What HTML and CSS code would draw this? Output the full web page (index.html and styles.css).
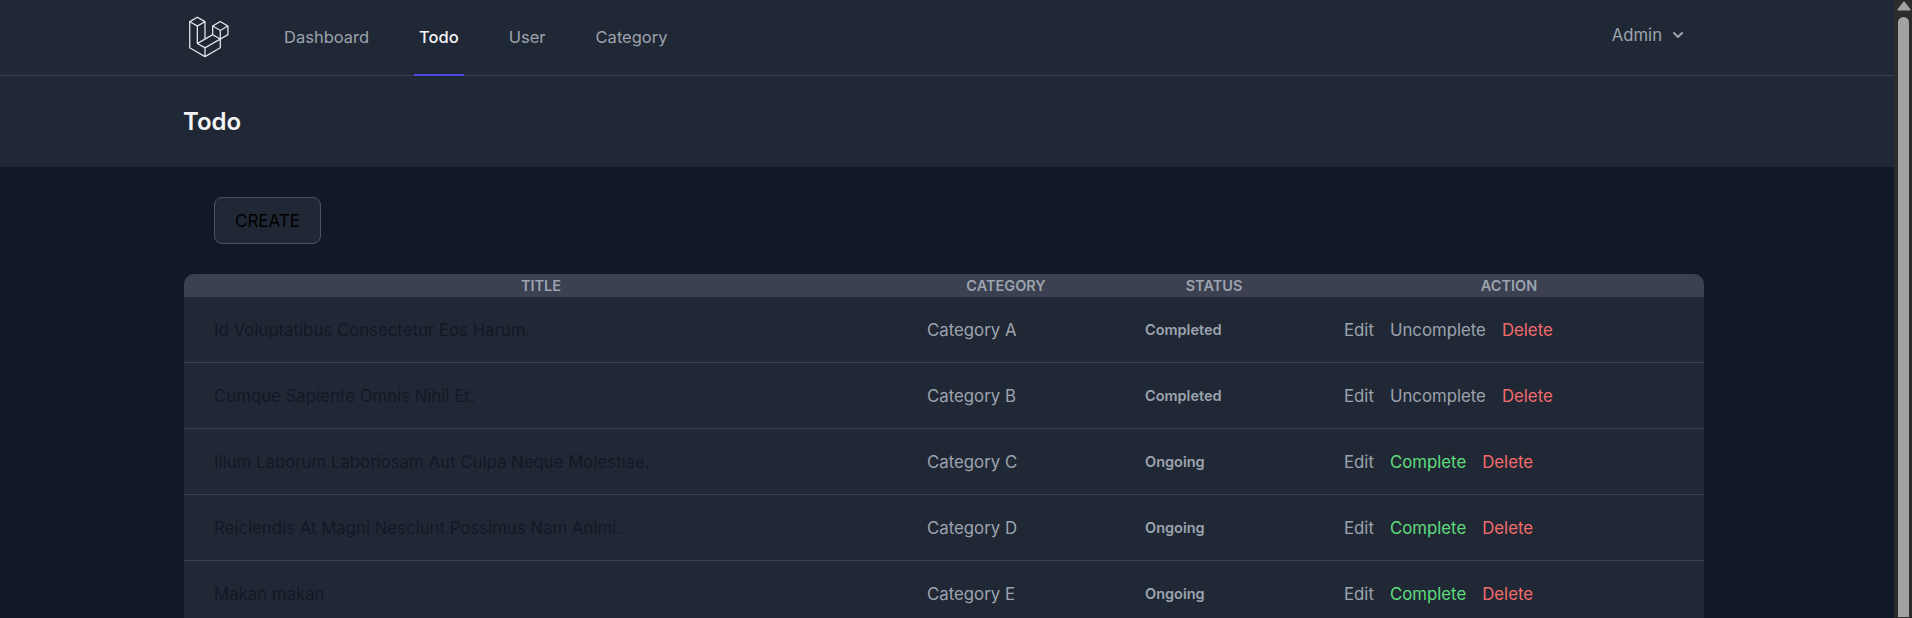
FILE: index.html
```html
<!DOCTYPE html>
<html lang="en">
<head>
<meta charset="utf-8">
<title>Todo</title>
<link rel="stylesheet" href="styles.css">
</head>
<body>
<div class="page">
  <nav class="nav">
    <div class="nav-inner">
      <div class="nav-left">
        <svg class="logo" viewBox="0 0 316 316" fill="currentColor">
          <path d="M305.8 81.125C305.77 80.995 305.69 80.885 305.65 80.755C305.56 80.525 305.49 80.285 305.37 80.075C305.29 79.935 305.17 79.815 305.07 79.685C304.94 79.515 304.83 79.325 304.68 79.175C304.55 79.045 304.39 78.955 304.25 78.845C304.09 78.715 303.95 78.575 303.77 78.475L251.32 48.275C249.97 47.495 248.31 47.495 246.96 48.275L194.51 78.475C194.33 78.575 194.19 78.725 194.03 78.845C193.89 78.955 193.73 79.045 193.6 79.175C193.45 79.325 193.34 79.515 193.21 79.685C193.11 79.815 192.99 79.935 192.91 80.075C192.79 80.285 192.71 80.525 192.63 80.755C192.58 80.875 192.51 80.995 192.48 81.125C192.38 81.495 192.33 81.875 192.33 82.265V139.625L148.62 164.795V52.575C148.62 52.185 148.57 51.805 148.47 51.435C148.44 51.305 148.36 51.195 148.32 51.065C148.23 50.835 148.16 50.595 148.04 50.385C147.96 50.245 147.84 50.125 147.74 49.995C147.61 49.825 147.5 49.635 147.35 49.485C147.22 49.355 147.06 49.265 146.92 49.155C146.76 49.025 146.62 48.885 146.44 48.785L93.99 18.585C92.64 17.805 90.98 17.805 89.63 18.585L37.18 48.785C37 48.885 36.86 49.035 36.7 49.155C36.56 49.265 36.4 49.355 36.27 49.485C36.12 49.635 36.01 49.825 35.88 49.995C35.78 50.125 35.66 50.245 35.58 50.385C35.46 50.595 35.38 50.835 35.3 51.065C35.25 51.185 35.18 51.305 35.15 51.435C35.05 51.805 35 52.185 35 52.575V232.235C35 233.795 35.84 235.245 37.19 236.025L142.1 296.425C142.33 296.555 142.58 296.635 142.83 296.725C142.95 296.765 143.06 296.835 143.18 296.865C143.55 296.965 143.93 297.015 144.31 297.015C144.69 297.015 145.07 296.965 145.44 296.865C145.55 296.835 145.65 296.775 145.76 296.735C146.02 296.645 146.28 296.565 146.52 296.425L251.43 236.025C252.79 235.245 253.62 233.805 253.62 232.235V174.885L303.86 145.955C305.22 145.175 306.05 143.725 306.05 142.165V82.265C305.95 81.875 305.9 81.495 305.8 81.125ZM144.2 227.205L100.57 202.515L146.39 176.135L196.66 147.195L240.33 172.335L208.29 190.625L144.2 227.205ZM244.75 114.995V164.795L226.39 154.225L201.03 139.625V89.825L219.39 100.395L244.75 114.995ZM249.12 57.105L292.81 82.265L249.12 107.425L205.43 82.265L249.12 57.105ZM114.49 184.425L96.13 194.995V85.305L121.49 70.705L139.85 60.135V169.815L114.49 184.425ZM91.76 27.425L135.45 52.585L91.76 77.745L48.07 52.585L91.76 27.425ZM43.67 60.135L62.03 70.705L87.39 85.305V202.545V202.555V202.565C87.39 202.735 87.44 202.895 87.46 203.055C87.49 203.265 87.49 203.485 87.55 203.695V203.705C87.6 203.875 87.69 204.035 87.76 204.195C87.84 204.375 87.89 204.575 87.99 204.745C87.99 204.745 87.99 204.755 88 204.755C88.09 204.905 88.22 205.035 88.33 205.175C88.45 205.335 88.55 205.495 88.69 205.635L88.7 205.645C88.82 205.765 88.98 205.855 89.12 205.965C89.28 206.085 89.42 206.225 89.59 206.325C89.6 206.325 89.6 206.325 89.61 206.335C89.62 206.335 89.62 206.345 89.63 206.345L139.87 234.775V285.065L43.67 229.705V60.135ZM244.75 229.705L148.58 285.075V234.775L219.8 194.115L244.75 179.875V229.705ZM297.2 139.625L253.49 164.795V114.995L278.85 100.395L297.21 89.825V139.625H297.2Z"/>
        </svg>
        <div class="links">
          <a class="link">Dashboard</a>
          <a class="link active">Todo</a>
          <a class="link">User</a>
          <a class="link">Category</a>
        </div>
      </div>
      <div class="user">Admin
        <svg class="chev" viewBox="0 0 20 20" fill="currentColor"><path d="M5.290 7.290a1 1 0 0 1 1.420 0L10 10.590l3.290-3.300a1 1 0 1 1 1.420 1.420l-4 4a1 1 0 0 1-1.420 0l-4-4a1 1 0 0 1 0-1.420z"/></svg>
      </div>
    </div>
  </nav>
  <header class="head"><h1 class="head-title">Todo</h1></header>
  <main class="main">
    <div class="content">
      <div class="toolbar"><a class="create">CREATE</a></div>
      <table class="table">
        <colgroup><col class="c1"><col class="c2"><col class="c3"><col class="c4"></colgroup>
        <thead><tr><th>TITLE</th><th>CATEGORY</th><th>STATUS</th><th>ACTION</th></tr></thead>
        <tbody>
          <tr><td class="t">Id Voluptatibus Consectetur Eos Harum.</td><td>Category A</td><td class="s">Completed</td><td><div class="acts"><a>Edit</a><a>Uncomplete</a><a class="del">Delete</a></div></td></tr>
          <tr><td class="t">Cumque Sapiente Omnis Nihil Et.</td><td>Category B</td><td class="s">Completed</td><td><div class="acts"><a>Edit</a><a>Uncomplete</a><a class="del">Delete</a></div></td></tr>
          <tr><td class="t">Illum Laborum Laboriosam Aut Culpa Neque Molestiae.</td><td>Category C</td><td class="s">Ongoing</td><td><div class="acts"><a>Edit</a><a class="ok">Complete</a><a class="del">Delete</a></div></td></tr>
          <tr><td class="t">Reiciendis At Magni Nesciunt Possimus Nam Animi.</td><td>Category D</td><td class="s">Ongoing</td><td><div class="acts"><a>Edit</a><a class="ok">Complete</a><a class="del">Delete</a></div></td></tr>
          <tr><td class="t">Makan makan</td><td>Category E</td><td class="s">Ongoing</td><td><div class="acts"><a>Edit</a><a class="ok">Complete</a><a class="del">Delete</a></div></td></tr>
        </tbody>
      </table>
    </div>
  </main>
</div>
<div class="scrollbar">
  <svg class="arrow" viewBox="0 0 14 10"><path d="M7 1.500 12.500 8.500H1.500Z" fill="#a3a3a3" stroke="#a3a3a3" stroke-width="2" stroke-linejoin="round"/></svg>
  <div class="thumb"></div>
</div>
</body>
</html>
```

FILE: styles.css
```css
* { box-sizing: border-box; }
html, body { margin: 0; height: 100%; overflow: hidden; }
body { display: flex; background: #111926; font-family: Inter, "Liberation Sans", sans-serif; font-size: 16px; color: #9ca3af; }
.page { flex: 1; min-width: 0; height: 618px; overflow: hidden; }
.nav { height: 76px; background: #212835; border-bottom: 1px solid #3b4150; }
.nav-inner { width: 1520px; margin-left: 184px; height: 75px; display: flex; justify-content: space-between; }
.nav-left { display: flex; }
.logo { width: 46px; height: 46px; margin-top: 14px; color: #e5e7eb; }
.links { display: flex; gap: 40px; margin-left: 49px; }
.link { display: flex; align-items: center; height: 76px; padding: 0 5px; border-bottom: 2px solid transparent; color: #9ca3af; font-size: 16.500px; }
.link.active { color: #f3f4f6; border-bottom-color: #4f46e5; font-weight: 500; }
.user { display: flex; align-items: center; height: 69px; margin-right: 16px; color: #9ca3af; gap: 6px; font-size: 16.700px; }
.chev { width: 20px; height: 20px; }
.head { height: 91px; background: #212835; display: flex; align-items: center; padding-left: 183px; }
.head-title { margin: 0; font-size: 24px; font-weight: 600; color: #f3f4f6; }
.main { padding-top: 30px; }
.content { width: 1520px; margin-left: 184px; }
.toolbar { display: flex; padding-left: 30px; margin-bottom: 30px; }
.create { display: flex; align-items: center; justify-content: center; width: 107px; height: 47px; background: #212835; border: 1px solid #4b5262; border-radius: 8px; color: #000; font-size: 17px; }
.table { width: 100%; border-collapse: separate; border-spacing: 0; table-layout: fixed; background: #212835; border-radius: 10px 10px 0 0; }
.c1 { width: 714px; } .c2 { width: 216px; } .c3 { width: 200px; }
th { height: 23px; padding: 0; background: #3b4150; font-size: 14.500px; font-weight: 600; color: #9ca3af; text-align: center; line-height: 20px; }
th:first-child { border-top-left-radius: 10px; }
th:last-child { border-top-right-radius: 10px; }
td { height: 66px; padding: 0 0 0 29px; border-bottom: 1px solid #3b4150; font-size: 16.800px; color: #9ca3af; }
td.t { padding-left: 30px; color: #111926; }
td.s { padding-left: 31px; font-size: 14.500px; font-weight: 600; }
td:last-child { padding-left: 30px; }
.acts { display: flex; gap: 16px; }
.ok { color: #5fdc7c; }
.del { color: #f26b6b; }
.scrollbar { width: 18px; height: 618px; background: #2c2c2c; flex: none; padding: 0 3px 0 4px; }
.arrow { display: block; width: 14px; height: 10px; margin: 1px 0 0 -1px; }
.thumb { width: 11px; height: 600px; margin-top: 6px; background: #a3a3a3; border-radius: 6px 6px 0 0; }
```
